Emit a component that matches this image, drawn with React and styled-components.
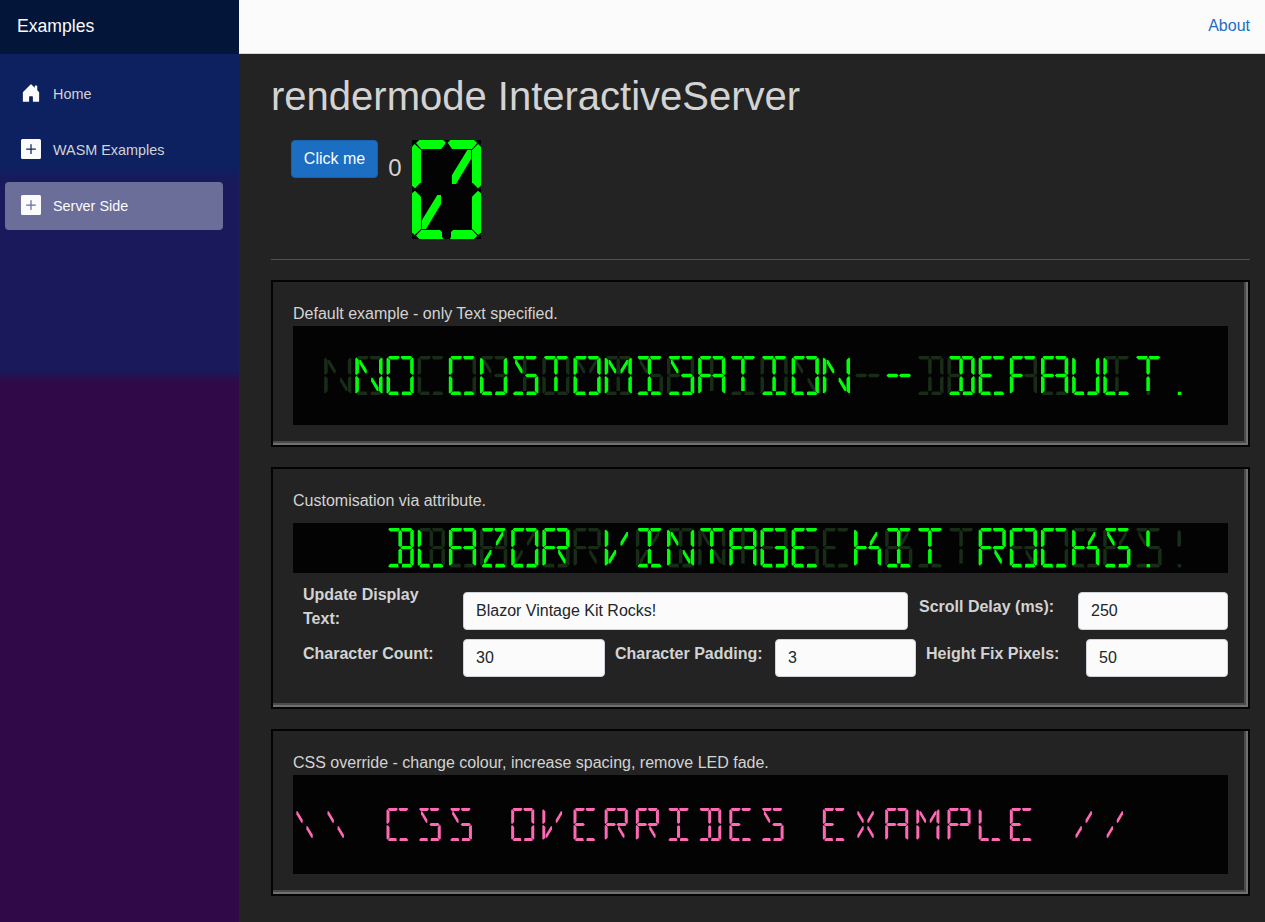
import React from 'react';
import styled, { createGlobalStyle } from 'styled-components';

const Global = createGlobalStyle`
  *, *::before, *::after { box-sizing: border-box; }
  body {
    margin: 0;
    overflow: hidden;
    background: #232323;
    color: #d3d3d3;
    font: 16px/24px "Liberation Sans", Arial, sans-serif;
  }
`;

const Page = styled.div`display: flex; height: 922px;`;

const Sidebar = styled.aside`
  width: 239px;
  flex: none;
  background: linear-gradient(180deg, #0d2060 0 165px, #19195b 181px 370px, #300a48 382px);
`;
const Brand = styled.div`
  height: 54px;
  padding: 14px 17px;
  background: #04153a;
  color: #fbfbfb;
  font-size: 17.6px;
`;
const Nav = styled.nav`
  display: flex;
  flex-direction: column;
  gap: 8px;
  padding: 16px 16px 0 5px;
`;
const NavLink = styled.a`
  display: flex;
  align-items: center;
  height: 48px;
  padding-left: 16px;
  gap: 12px;
  border-radius: 4px;
  font-size: 14.4px;
  color: ${p => (p.$active ? '#fbfbfb' : '#d3d3d3')};
  background: ${p => (p.$active ? '#6b6e99' : 'transparent')};
  svg { display: block; margin-top: -2px; }
`;

const Main = styled.main`flex: 1; min-width: 0;`;
const TopRow = styled.header`
  display: flex;
  justify-content: flex-end;
  height: 54px;
  padding: 14px 15px 0;
  background: #fbfbfb;
  border-bottom: 1px solid #d6d5d5;
`;
const AboutLink = styled.a`color: #1b6ec2;`;
const Content = styled.article`padding: 18px 15px 0 32px;`;
const Title = styled.h1`
  margin: 0 0 20px;
  font-size: 40px;
  line-height: 48px;
  font-weight: 400;
`;
const Counter = styled.div`
  display: flex;
  align-items: flex-start;
  height: 120px;
  padding-left: 20px;
  border-bottom: 1px solid #505050;
`;
const Button = styled.button`
  width: 87px;
  height: 38px;
  padding: 0;
  border: 1px solid #1861ac;
  border-radius: 4px;
  background: #1b6ec2;
  color: #fbfbfb;
  font: inherit;
`;
const Count = styled.span`
  width: 14px;
  margin: 10px 10px 0;
  font-size: 24px;
  line-height: 36px;
  text-align: center;
`;
const Digit = styled.span`
  display: block;
  width: 69px;
  height: 99px;
  background: #030303;
  svg { display: block; }
`;

const Card = styled.section`
  height: ${p => p.$height}px;
  margin-top: 20px;
  padding: 20px 20px 0;
  border: 2px solid #030303;
  box-shadow: inset -2px -2px 0 #707070, inset -4px -4px 0 #4a4a4a;
`;
const Display = styled.div`
  display: flex;
  align-items: center;
  height: ${p => p.$height}px;
  margin-top: ${p => p.$top}px;
  background: #030303;
  svg { display: block; }
`;

const Form = styled.form`
  display: flex;
  flex-direction: column;
  gap: 9px;
  padding: 10px 0 0 10px;
`;
const Fields = styled.div`
  display: grid;
  grid-template-columns: ${p => p.$columns};
  align-items: end;
`;
const Label = styled.label`
  padding-bottom: ${p => (p.$tall ? 0 : '11px')};
  margin-bottom: ${p => (p.$tall ? '-1px' : 0)};
  font-weight: 700;
`;
const Input = styled.input`
  width: 100%;
  height: 38px;
  padding: 6px 12px;
  border: 1px solid #ced4da;
  border-radius: 4px;
  background: #fbfbfb;
  color: #212529;
  font: inherit;
`;

/* Segments of one 207 x 297 display cell. */
const SEGMENTS = {
  a: '12,9 22,0 94,0 102,8 88,27 27,27',
  A: '107,8 115,0 186,0 196,9 180,27 120,27',
  f: '0,20 8,12 27,30 27,127 9,145 0,137',
  b: '180,30 198,12 207,20 207,137 198,145 180,127',
  e: '9,152 27,170 27,267 8,285 0,277 0,160',
  c: '198,152 207,160 207,277 199,285 180,267 180,170',
  d: '12,287 28,270 84,270 90,276 90,290 94,297 22,297',
  D: '117,276 123,270 180,270 196,287 186,297 114,297 117,290',
  g: '10,148 22,136 88,136 102,148 88,161 22,161',
  G: '105,148 119,136 185,136 197,148 185,161 119,161',
  i: '90,28 103,14 117,28 117,130 103,145 90,130',
  l: '103,152 117,167 117,267 90,267 90,167',
  h: '30,30 41,30 87,105 87,132 75,132 30,57',
  j: '120,132 120,105 166,30 177,30 177,57 132,132',
  k: '30,267 30,240 76,165 87,165 87,192 42,267',
  m: '120,165 131,165 177,240 177,267 165,267 120,192',
  p: '92,272 119,272 119,297 92,297',
};

const CHARACTERS = {
  A: 'aAfbecgG', B: 'aAilbcdDG', C: 'aAfedD', D: 'aAilbcdD', E: 'aAfedDg',
  F: 'aAfeg', G: 'aAfedDcG', I: 'aAildD', K: 'fegGjc', L: 'fedD',
  M: 'febchj', N: 'febchm', O: 'aAfbecdD', P: 'aAfbegG', R: 'aAfbegGm',
  S: 'aAhGcdD', T: 'aAil', U: 'fbecdD', V: 'fekj', X: 'hjkm', Z: 'aAjkdD',
  0: 'aAfbecdDjk', '-': 'gG', '.': 'p', '!': 'ip', '/': 'jk', '\\': 'hm', ' ': '',
};

const PITCH = 935 / 30;

function Cells({ text, start, width, height, color }) {
  return (
    <g fill={color}>
      {[...text.toUpperCase()].map((ch, n) => (
        <g
          key={n}
          transform={`translate(${(start + n) * PITCH} 0) scale(${width / 207} ${height / 297})`}
        >
          {[...CHARACTERS[ch]].map(s => <polygon key={s} points={SEGMENTS[s]} />)}
        </g>
      ))}
    </g>
  );
}

function SegmentDisplay({ text, start, fadeStart, color = '#00ff0a', boxHeight = 99, top = 0, width = 27.2, height = 39 }) {
  return (
    <Display $height={boxHeight} $top={top} role="img" aria-label={text}>
      <svg width="935" height={height} viewBox={`0 0 935 ${height}`}>
        {fadeStart !== undefined && (
          <Cells text={text} start={fadeStart} width={width} height={height} color="#182c18" />
        )}
        <Cells text={text} start={start} width={width} height={height} color={color} />
      </svg>
    </Display>
  );
}

const HomeIcon = () => (
  <svg width="20" height="20" viewBox="0 0 16 16" fill="#fbfbfb">
    <path d="M6.5 14.5v-3.505c0-.245.25-.495.5-.495h2c.25 0 .5.25.5.5v3.5a.5.5 0 0 0 .5.5h4a.5.5 0 0 0 .5-.5v-7a.5.5 0 0 0-.146-.354L13 5.793V2.5a.5.5 0 0 0-.5-.5h-1a.5.5 0 0 0-.5.5v1.293L8.354 1.146a.5.5 0 0 0-.708 0l-6 6A.5.5 0 0 0 1.5 7.5v7a.5.5 0 0 0 .5.5h4a.5.5 0 0 0 .5-.5Z" />
  </svg>
);
const PlusIcon = () => (
  <svg width="20" height="20" viewBox="0 0 16 16" fill="#fbfbfb">
    <path d="M1.2 0A1.2 1.2 0 0 0 0 1.2v13.6A1.2 1.2 0 0 0 1.2 16h13.6a1.2 1.2 0 0 0 1.2-1.2V1.2A1.2 1.2 0 0 0 14.8 0H1.2zM8.5 4.5v3h3a.5.5 0 0 1 0 1h-3v3a.5.5 0 0 1-1 0v-3h-3a.5.5 0 0 1 0-1h3v-3a.5.5 0 0 1 1 0z" />
  </svg>
);

export default function App() {
  return (
    <>
      <Global />
      <Page>
        <Sidebar>
          <Brand>Examples</Brand>
          <Nav>
            <NavLink><HomeIcon />Home</NavLink>
            <NavLink><PlusIcon />WASM Examples</NavLink>
            <NavLink $active><PlusIcon />Server Side</NavLink>
          </Nav>
        </Sidebar>
        <Main>
          <TopRow><AboutLink>About</AboutLink></TopRow>
          <Content>
            <Title>rendermode InteractiveServer</Title>
            <Counter>
              <Button>Click me</Button>
              <Count>0</Count>
              <Digit>
                <svg width="69" height="99" viewBox="0 0 207 297" fill="#00ff0a" role="img" aria-label="0">
                  {[...CHARACTERS[0]].map(s => <polygon key={s} points={SEGMENTS[s]} />)}
                </svg>
              </Digit>
            </Counter>
            <Card $height={167}>
              Default example - only Text specified.
              <SegmentDisplay text="No Customisation - Default." start={2} fadeStart={1} />
            </Card>
            <Card $height={242}>
              Customisation via attribute.
              <SegmentDisplay text="Blazor Vintage Kit Rocks!" start={3} fadeStart={4} boxHeight={50} top={10} height={39.4} />
              <Form>
                <Fields $columns="160px 445px 11px 159px 150px">
                  <Label $tall>Update Display<br />Text:</Label>
                  <Input defaultValue="Blazor Vintage Kit Rocks!" />
                  <span />
                  <Label>Scroll Delay (ms):</Label>
                  <Input defaultValue="250" />
                </Fields>
                <Fields $columns="160px 142px 10px 160px 141px 10px 160px 142px">
                  <Label>Character Count:</Label>
                  <Input defaultValue="30" />
                  <span />
                  <Label>Character Padding:</Label>
                  <Input defaultValue="3" />
                  <span />
                  <Label>Height Fix Pixels:</Label>
                  <Input defaultValue="50" />
                </Fields>
              </Form>
            </Card>
            <Card $height={167}>
              CSS override - change colour, increase spacing, remove LED fade.
              <SegmentDisplay text="\\ CSS Overrides Example //" start={0} color="#ff69b4" width={23.1} height={33} />
            </Card>
          </Content>
        </Main>
      </Page>
    </>
  );
}
